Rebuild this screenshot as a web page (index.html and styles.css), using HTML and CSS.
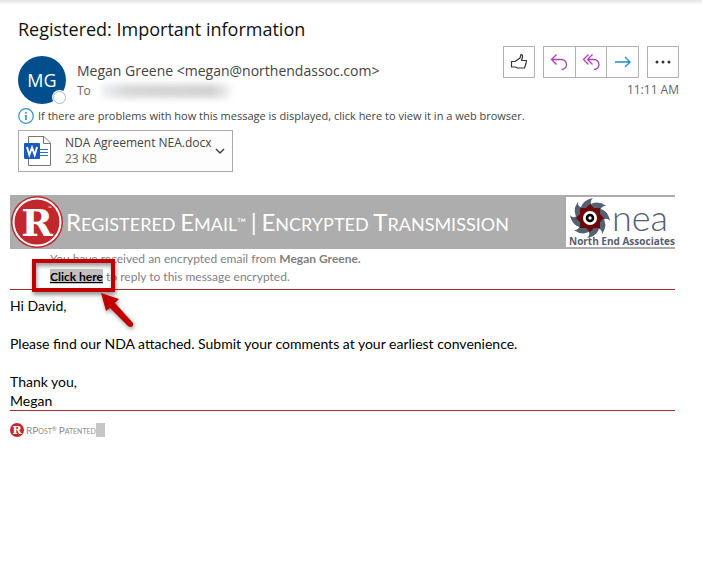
FILE: index.html
```html
<!DOCTYPE html>
<html lang="en">
<head>
 <meta charset="UTF-8">
 <meta name="viewport" content="width=device-width, initial-scale=1.0">
 <title>Registered: Important information</title>
 <link rel="stylesheet" href="styles.css">
</head>
<body>

<header class="mailHeader">
 <h1 class="subject">Registered: Important information</h1>

 <div class="senderRow">
  <div class="avatar">MG<span class="presence"></span></div>
  <div class="senderInfo">
   <div class="from">Megan Greene &lt;megan@northendassoc.com&gt;</div>
   <div class="to">To <span class="recipient"></span></div>
  </div>
  <div class="actions">
   <div class="toolbar">
    <div class="btnGroup">
     <button type="button" aria-label="Like">
      <svg width="20" height="20" viewBox="0 0 20 20" fill="none" stroke="#333" stroke-width="1.2" stroke-linejoin="round">
       <path d="M2.5 9.5H6L11 6L12 2.5Q13.8 2.5 13.5 5L12.5 8.5H17.5L17 11.5L15.5 16H8.5L6.5 15H2.5Z"/>
      </svg>
     </button>
    </div>
    <div class="btnGroup replyGroup">
     <button type="button" aria-label="Reply">
      <svg width="20" height="20" viewBox="0 0 20 20" fill="none" stroke="#a846b4" stroke-width="1.3">
       <path d="M7.5 2.5L2.5 7.5L7.5 12.5M2.5 7.5H12.5A5 5 0 0 1 12.5 17.5"/>
      </svg>
     </button>
     <button type="button" aria-label="Reply all">
      <svg width="20" height="20" viewBox="0 0 20 20" fill="none" stroke="#a846b4" stroke-width="1.3">
       <path d="M7.5 2.5L2.5 7.5L7.5 12.5M11.5 2.5L6.5 7.5L11.5 12.5M6.5 7.5H13A5 5 0 0 1 13 17.5"/>
      </svg>
     </button>
     <button type="button" aria-label="Forward">
      <svg width="20" height="20" viewBox="0 0 20 20" fill="none" stroke="#1f8ad2" stroke-width="1.3">
       <path d="M2 10H17M12 5L17 10L12 15"/>
      </svg>
     </button>
    </div>
    <div class="btnGroup">
     <button type="button" aria-label="More actions">
      <svg width="20" height="20" viewBox="0 0 20 20" fill="#333">
       <circle cx="4" cy="10" r="1.5"/><circle cx="10" cy="10" r="1.5"/><circle cx="16" cy="10" r="1.5"/>
      </svg>
     </button>
    </div>
   </div>
   <time class="time">11:11 AM</time>
  </div>
 </div>

 <div class="infoBar">
  <svg width="16" height="16" viewBox="0 0 16 16">
   <circle cx="8" cy="8" r="7.3" fill="#fff" stroke="#2b8fc9" stroke-width="1.2"/>
   <path d="M8 7V12M8 4V5.5" stroke="#2b8fc9" stroke-width="1.6"/>
  </svg>
  <span>If there are problems with how this message is displayed, click here to view it in a web browser.</span>
 </div>

 <button type="button" class="attachment">
  <svg width="28" height="32" viewBox="0 0 28 32">
   <path d="M4.5 1.5H20L26.5 8V30.5H4.5Z" fill="#fff" stroke="#777"/>
   <path d="M19.5 1.5V8.5H26.5" fill="none" stroke="#777"/>
   <path d="M16 14.5H24M16 17.5H24M16 20.5H24" stroke="#2b6fc9"/>
   <rect y="8" width="16" height="16" rx="1" fill="#185abd"/>
   <path d="M3 12L5.3 20L8 12.5L10.7 20L13 12" fill="none" stroke="#fff" stroke-width="1.9"/>
  </svg>
  <span class="fileInfo">
   <span class="fileName">NDA Agreement NEA.docx</span>
   <span class="fileSize">23 KB</span>
  </span>
  <svg class="chevron" width="10" height="10" viewBox="0 0 10 10" fill="none" stroke="#444" stroke-width="1.5">
   <path d="M1 3L5 7L9 3"/>
  </svg>
 </button>
</header>

<main class="mailBody">
 <div class="banner">
  <svg class="rpostLogo" width="52" height="52" viewBox="0 0 52 52">
   <circle cx="26" cy="26" r="26" fill="#c1272d"/>
   <circle cx="26" cy="26" r="23.5" fill="none" stroke="#fff" stroke-width="2"/>
   <text class="logoR" x="26" y="40" text-anchor="middle" font-size="38">R</text>
   <text class="logoTm" x="37" y="14" font-size="5">™</text>
  </svg>
  <div class="bannerTitle"><span class="cap">R</span>egistered <span class="cap">E</span>mail<span class="tm">™</span> <span class="cap">|</span> <span class="cap">E</span>ncrypted <span class="cap">T</span>ransmission</div>
  <svg class="neaLogo" width="109" height="50" viewBox="0 0 109 50">
   <rect width="109" height="50" fill="#fff"/>
   <g fill="#566070">
    <path d="M14 15Q15 3 27 1Q22 5 28 11L24 21Z"/>
    <path d="M14 15Q15 3 27 1Q22 5 28 11L24 21Z" transform="rotate(45 24 21)"/>
    <path d="M14 15Q15 3 27 1Q22 5 28 11L24 21Z" transform="rotate(90 24 21)"/>
    <path d="M14 15Q15 3 27 1Q22 5 28 11L24 21Z" transform="rotate(135 24 21)"/>
    <path d="M14 15Q15 3 27 1Q22 5 28 11L24 21Z" transform="rotate(180 24 21)"/>
    <path d="M14 15Q15 3 27 1Q22 5 28 11L24 21Z" transform="rotate(225 24 21)"/>
    <path d="M14 15Q15 3 27 1Q22 5 28 11L24 21Z" transform="rotate(270 24 21)"/>
    <path d="M14 15Q15 3 27 1Q22 5 28 11L24 21Z" transform="rotate(315 24 21)"/>
   </g>
   <path d="M24 7L28 11L34 11L34 17L38 21L34 25L34 31L28 31L24 35L20 31L14 31L14 25L10 21L14 17L14 11L20 11Z" fill="#6b0a0c"/>
   <circle cx="24" cy="21" r="7" fill="#fff"/>
   <circle cx="24" cy="21" r="3" fill="#fff" stroke="#000" stroke-width="2.6"/>
   <text class="neaName" x="46" y="34" font-size="36">nea</text>
   <text class="neaFull" x="3" y="48" font-size="10">North End Associates</text>
  </svg>
 </div>

 <div class="notice">
  <p>You have received an encrypted email from <b>Megan Greene.</b></p>
  <p>
   <span class="callout">
    <a href="#reply" class="replyLink">Click here</a>
    <span class="calloutBox"></span>
    <svg class="calloutArrow" width="40" height="42" viewBox="0 0 40 42">
     <path d="M3 3L21 9L17 13L35 33Q36 36 33 37Q31 37 30 36L12 18L8 21Z" fill="#c00000"/>
    </svg>
   </span>
   to reply to this message encrypted.
  </p>
 </div>

 <div class="message">
  <p>Hi David,</p>
  <p>Please find our NDA attached. Submit your comments at your earliest convenience.</p>
  <p>Thank you,<br>Megan</p>
 </div>

 <footer class="mailFooter">
  <svg width="14" height="14" viewBox="0 0 14 14">
   <circle cx="7" cy="7" r="7" fill="#c1272d"/>
   <text class="logoR" x="7" y="11" text-anchor="middle" font-size="11">R</text>
  </svg>
  <span class="patented"><span class="cap">RP</span>ost<sup>®</sup> <span class="cap">P</span>atented</span>
  <span class="cursorMark"></span>
 </footer>
</main>

</body>
</html>
```
FILE: styles.css
```css
* {
 box-sizing: border-box;
}

body {
 margin: 0;
 background: #fff linear-gradient(#e4e4e4, #fff) no-repeat top / 100% 5px;
 font-family: "Open Sans", "Noto Sans", sans-serif;
 color: #444;
}

p {
 margin: 0;
}

button {
 font-family: inherit;
 color: inherit;
 cursor: pointer;
}

.mailHeader {
 padding: 17px 23px 0 18px;
}

.subject {
 margin: 0;
 font-size: 18px;
 font-weight: 400;
 line-height: 24px;
 color: #111;
}

.senderRow {
 display: flex;
 padding-top: 5px;
}

.avatar {
 position: relative;
 width: 48px;
 height: 48px;
 margin-top: 10px;
 border-radius: 50%;
 background: #004e8c;
 color: #fff;
 font-size: 18px;
 line-height: 48px;
 text-align: center;
}

.presence {
 position: absolute;
 right: 0;
 bottom: 0;
 width: 13px;
 height: 13px;
 border: 1px solid #a5b9c6;
 border-radius: 50%;
 background: #fff;
 box-shadow: 0 0 0 1px #fff;
}

.senderInfo {
 flex: 1;
 padding: 14px 0 0 11px;
}

.from {
 font-size: 14px;
 line-height: 22px;
 white-space: nowrap;
}

.to {
 display: flex;
 align-items: center;
 gap: 10px;
 font-size: 12px;
 line-height: 18px;
 color: #666;
}

.recipient {
 width: 130px;
 height: 14px;
 border-radius: 4px;
 background: linear-gradient(90deg, #eef2f5, #d8d8d8 20%, #d2d2d2 85%, #f2f2f2);
 filter: blur(3px);
}

.actions {
 text-align: right;
}

.toolbar {
 display: flex;
 gap: 8px;
}

.btnGroup {
 display: flex;
 width: 32px;
 height: 32px;
 border: 1px solid #b3b0ad;
}

.replyGroup {
 width: 96px;
}

.btnGroup button {
 display: flex;
 flex: 1;
 align-items: center;
 justify-content: center;
 padding: 0;
 border: 0;
 background: #fff;
}

.btnGroup button + button {
 border-left: 1px solid #b3b0ad;
}

.time {
 display: block;
 padding-top: 3px;
 font-size: 12px;
 line-height: 18px;
 color: #666;
}

.infoBar {
 display: flex;
 align-items: center;
 gap: 4px;
 padding-top: 3px;
 font-size: 11px;
 line-height: 18px;
}

.attachment {
 display: flex;
 align-items: center;
 width: 215px;
 height: 42px;
 margin-top: 5px;
 padding: 0 7px 0 5px;
 border: 1px solid #ababab;
 background: #fdfdfd;
 text-align: left;
}

.fileInfo {
 flex: 1;
 padding-left: 13px;
 font-size: 12px;
 line-height: 16px;
}

.fileName,
.fileSize {
 display: block;
 white-space: nowrap;
}

.fileSize {
 color: #666;
}

.mailBody {
 margin: 23px 27px 0 10px;
 font-family: Lato, "Open Sans", sans-serif;
}

.banner {
 display: flex;
 align-items: center;
 height: 54px;
 padding-left: 1px;
 background: #adadad;
 color: #fff;
}

.bannerTitle {
 flex: 1;
 padding: 0 0 2px 3px;
 font-size: 18px;
 text-transform: uppercase;
 white-space: nowrap;
}

.bannerTitle .cap {
 font-size: 24px;
}

.tm {
 font-size: 12px;
 vertical-align: 4px;
}

.logoR {
 font-family: "DejaVu Serif", serif;
 font-weight: 700;
 fill: #fff;
}

.logoTm {
 fill: #fff;
}

.neaName {
 font-family: Lato, sans-serif;
 font-weight: 300;
 fill: #566070;
}

.neaFull {
 font-family: "Open Sans", sans-serif;
 font-weight: 700;
 fill: #566070;
}

.notice {
 padding: 1px 0 3px 40px;
 border-bottom: 1px solid #9e2f2b;
 font-size: 12px;
 line-height: 18px;
 color: #7f7f7f;
}

/* red frame and arrow lie over the reply link */
.callout {
 position: relative;
}

.replyLink {
 background: #c0c0c0;
 color: #000;
 font-weight: 700;
}

.calloutBox {
 position: absolute;
 top: -10px;
 left: -18px;
 width: 83px;
 height: 33px;
 border: 4px solid #c00000;
 box-shadow: 1px 3px 4px rgba(0, 0, 0, .4), inset 1px 3px 4px rgba(0, 0, 0, .4);
}

.calloutArrow {
 position: absolute;
 top: 21px;
 left: 48px;
 filter: drop-shadow(1px 2px 2px rgba(0, 0, 0, .4));
}

.message {
 padding-top: 6px;
 border-bottom: 1px solid #9e2f2b;
 font-size: 14px;
 line-height: 19px;
 color: #000;
}

.message p + p {
 margin-top: 19px;
}

.mailFooter {
 display: flex;
 align-items: center;
 padding-top: 12px;
 color: #8c8c8c;
}

.patented {
 padding-left: 2px;
 font-size: 7px;
 text-transform: uppercase;
}

.patented .cap {
 font-size: 10px;
}

.patented sup {
 font-size: 6px;
 line-height: 0;
}

.cursorMark {
 width: 9px;
 height: 14px;
 background: #c6c6c6;
}
```
